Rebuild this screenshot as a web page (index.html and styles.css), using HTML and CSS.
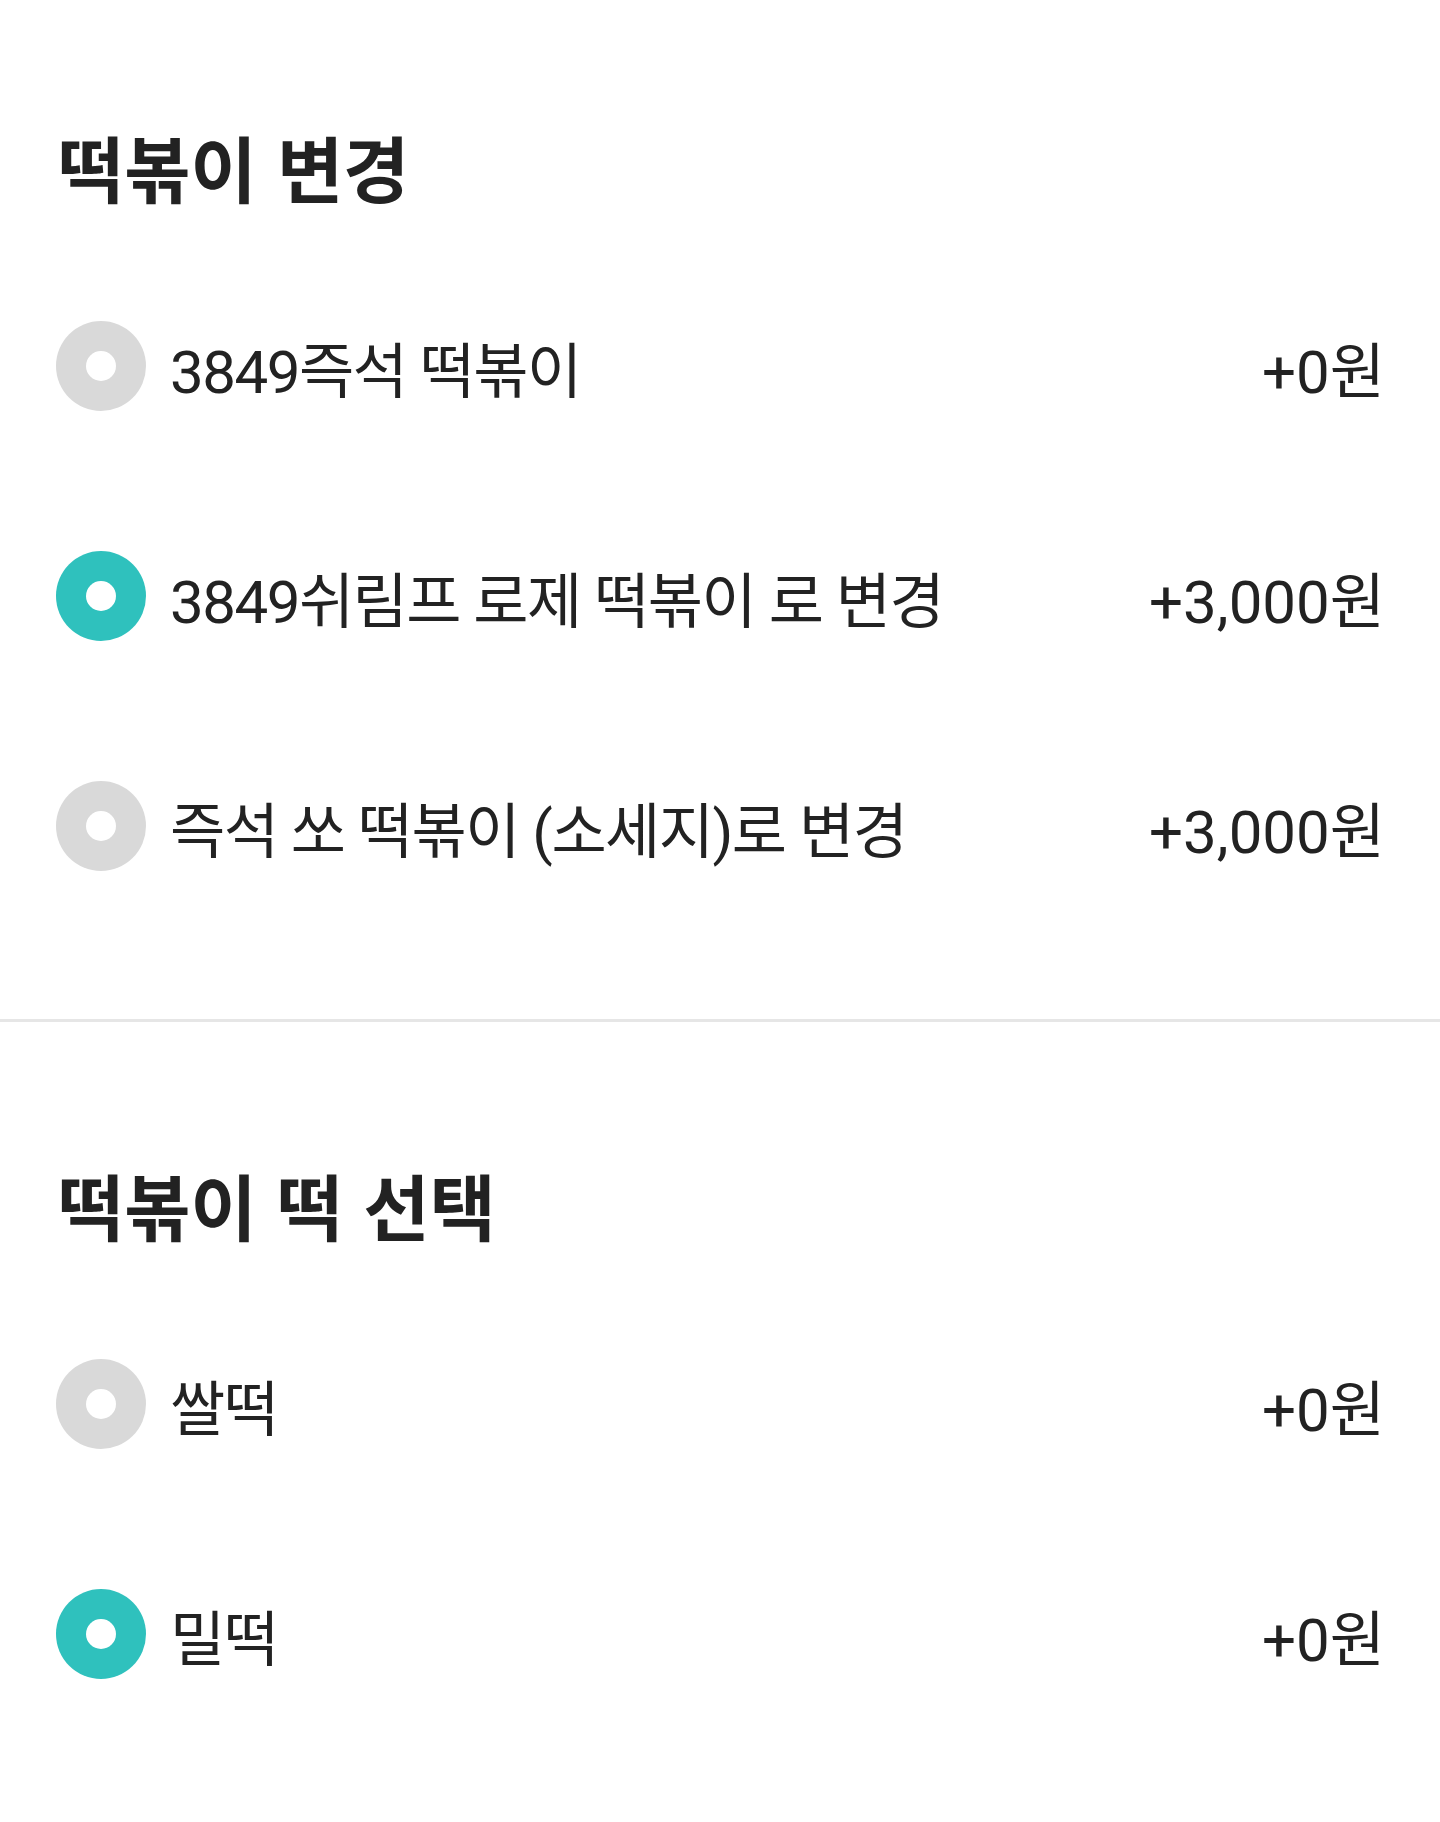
FILE: index.html
```html
<!DOCTYPE html>
<html lang="ko">
<head>
<meta charset="utf-8">
<link rel="stylesheet" href="styles.css">
</head>
<body>
<main class="page">
  <section class="group group-first">
    <h2 class="group-title">떡볶이 변경</h2>
    <ul class="options">
      <li class="option"><span class="radio"></span><span class="label">3849즉석 떡볶이</span><span class="price">+0원</span></li>
      <li class="option"><span class="radio radio-on"></span><span class="label">3849쉬림프 로제 떡볶이 로 변경</span><span class="price">+3,000원</span></li>
      <li class="option"><span class="radio"></span><span class="label">즉석 쏘 떡볶이 (소세지)로 변경</span><span class="price">+3,000원</span></li>
    </ul>
  </section>
  <hr class="divider">
  <section class="group group-second">
    <h2 class="group-title">떡볶이 떡 선택</h2>
    <ul class="options">
      <li class="option"><span class="radio"></span><span class="label">쌀떡</span><span class="price">+0원</span></li>
      <li class="option"><span class="radio radio-on"></span><span class="label">밀떡</span><span class="price">+0원</span></li>
    </ul>
  </section>
</main>
</body>
</html>
```

FILE: styles.css
```css
html, body {
  margin: 0;
  padding: 0;
  background: #ffffff;
}
body {
  width: 1440px;
  height: 1822px;
  overflow: hidden;
  font-family: Roboto, "Noto Sans CJK KR", "Noto Sans", sans-serif;
  color: #222222;
}
.page {
  display: flex;
  flex-direction: column;
}
.group {
  padding: 0 55px 0 56px;
}
.group-first {
  padding-top: 116px;
}
.group-second {
  padding-top: 132px;
}
.group-title {
  margin: 0;
  height: 100px;
  line-height: 100px;
  font-size: 72px;
  font-weight: 700;
  padding-left: 2px;
  font-family: "Noto Sans CJK KR", sans-serif;
  color: #222222;
}
.options {
  list-style: none;
  margin: 35px 0 0 0;
  padding: 0;
}
.option {
  height: 230px;
  display: flex;
  align-items: center;
}
.radio {
  width: 90px;
  height: 90px;
  border-radius: 50%;
  background: #d9d9d9;
  flex: none;
  display: flex;
  align-items: center;
  justify-content: center;
}
.radio::after {
  content: "";
  width: 30px;
  height: 30px;
  border-radius: 50%;
  background: #ffffff;
}
.radio-on {
  background: #2fc1bd;
}
.label {
  margin-left: 24px;
  font-size: 60px;
  letter-spacing: -1.5px;
  flex: 1;
}
.price {
  font-size: 60px;
}
.divider {
  margin: 78px 0 0 0;
  border: 0;
  height: 3px;
  background: #e6e6e6;
}
```
